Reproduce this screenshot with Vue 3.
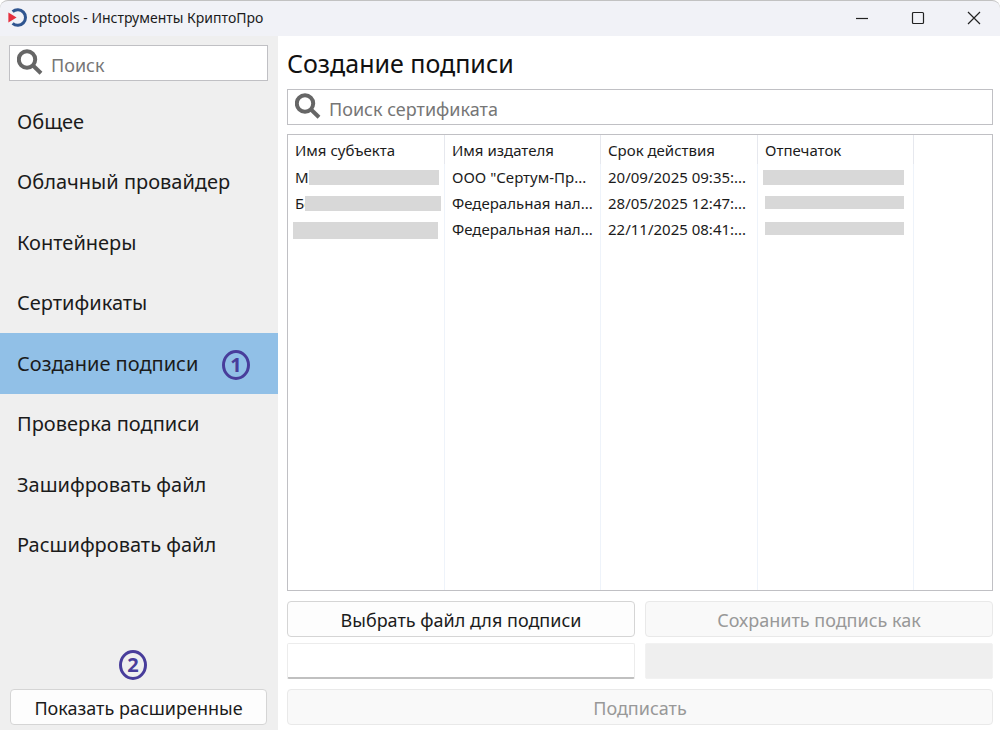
<script setup>
import { ref } from 'vue'

const sections = [
  'Общее',
  'Облачный провайдер',
  'Контейнеры',
  'Сертификаты',
  'Создание подписи',
  'Проверка подписи',
  'Зашифровать файл',
  'Расшифровать файл',
]
const active = ref(4)

const certificates = [
  { subject: 'М', issuer: 'ООО "Сертум-Пр...', expires: '20/09/2025 09:35:...', mask: 'a' },
  { subject: 'Бс', issuer: 'Федеральная нал...', expires: '28/05/2025 12:47:...', mask: 'b' },
  { subject: '', issuer: 'Федеральная нал...', expires: '22/11/2025 08:41:...', mask: 'c' },
]
</script>

<template>
  <div class="window">
    <header class="titlebar">
      <svg class="logo" viewBox="0 0 20 20" aria-hidden="true">
        <path d="M4.6 3.6A7.8 7.8 0 1 1 4.6 15.4" fill="none" stroke="#2f5590" stroke-width="3" />
        <path d="M0.4 4.4L8.6 9.5L0.4 14.6Z" fill="#e5303f" />
      </svg>
      <span class="caption">cptools - Инструменты КриптоПро</span>
      <div class="controls">
        <button type="button" aria-label="Свернуть">
          <svg viewBox="0 0 14 14"><path d="M1 7.5H13" /></svg>
        </button>
        <button type="button" aria-label="Развернуть">
          <svg viewBox="0 0 14 14"><rect x="1.5" y="1.5" width="11" height="11" rx="1" /></svg>
        </button>
        <button type="button" aria-label="Закрыть">
          <svg viewBox="0 0 14 14"><path d="M1 1L13 13M13 1L1 13" /></svg>
        </button>
      </div>
    </header>

    <div class="body">
      <aside class="sidebar">
        <label class="search">
          <svg viewBox="0 0 26 26" aria-hidden="true">
            <circle cx="10" cy="10.5" r="8.2" />
            <path d="M16 16.5L24 24.2" />
          </svg>
          <input type="text" placeholder="Поиск" aria-label="Поиск" />
        </label>
        <nav class="nav">
          <button
            v-for="(name, i) in sections"
            :key="name"
            type="button"
            :class="{ active: i === active }"
            @click="active = i"
          >
            {{ name }}
            <span v-if="i === 4" class="badge pinned">1</span>
          </button>
        </nav>
        <div class="more">
          <span class="badge">2</span>
          <button type="button" class="btn">Показать расширенные</button>
        </div>
      </aside>

      <main class="main">
        <h1>Создание подписи</h1>
        <label class="search">
          <svg viewBox="0 0 26 26" aria-hidden="true">
            <circle cx="10" cy="10.5" r="8.2" />
            <path d="M16 16.5L24 24.2" />
          </svg>
          <input type="text" placeholder="Поиск сертификата" aria-label="Поиск сертификата" />
        </label>
        <div class="list">
          <table>
            <colgroup>
              <col class="c1" /><col class="c2" /><col class="c1" /><col class="c2" /><col />
            </colgroup>
            <thead>
              <tr>
                <th>Имя субъекта</th>
                <th>Имя издателя</th>
                <th>Срок действия</th>
                <th>Отпечаток</th>
                <th></th>
              </tr>
            </thead>
            <tbody>
              <tr v-for="cert in certificates" :key="cert.mask">
                <td>{{ cert.subject }}<i class="mask" :class="'subject-' + cert.mask"></i></td>
                <td>{{ cert.issuer }}</td>
                <td>{{ cert.expires }}</td>
                <td><i class="mask" :class="'print-' + cert.mask"></i></td>
                <td></td>
              </tr>
              <tr class="filler"><td></td><td></td><td></td><td></td><td></td></tr>
            </tbody>
          </table>
        </div>
        <div class="files">
          <button type="button" class="btn">Выбрать файл для подписи</button>
          <button type="button" class="btn" disabled>Сохранить подпись как</button>
          <input type="text" class="path" aria-label="Файл для подписи" />
          <input type="text" class="path" aria-label="Файл подписи" disabled />
        </div>
        <button type="button" class="btn" disabled>Подписать</button>
      </main>
    </div>
  </div>
</template>

<style>
body {
  margin: 0;
  background: #fff;
}
</style>

<style scoped>
* {
  box-sizing: border-box;
}

.window {
  display: flex;
  flex-direction: column;
  min-height: 100vh;
  padding-bottom: 1px;
  font-family: "Noto Sans", "Open Sans", sans-serif;
  color: #1b1b1b;
  background: #fff;
}

button,
input {
  font-family: inherit;
  color: inherit;
}

.titlebar {
  display: flex;
  align-items: center;
  height: 36px;
  padding: 0 0 2px 8px;
  background: #f1f2f7;
  border-top: 1px solid #c2c2c2;
  border-radius: 8px 8px 0 0;
}

.logo {
  width: 20px;
  height: 20px;
}

.caption {
  margin-left: 4px;
  font-size: 14px;
  line-height: 20px;
}

.controls {
  display: flex;
  margin-left: auto;
}

.controls button {
  display: grid;
  place-items: center;
  width: 56px;
  height: 32px;
  padding: 0;
  border: 0;
  background: none;
}

.controls button:last-child {
  width: 52px;
  margin-left: 2px;
}

.controls svg {
  width: 14px;
  height: 14px;
  fill: none;
  stroke: #222;
  stroke-width: 1.2;
}

.body {
  display: flex;
  flex: 1;
}

.sidebar {
  display: flex;
  flex-direction: column;
  flex: 0 0 278px;
  min-width: 0;
  background: #efefef;
}

.search {
  display: flex;
  align-items: center;
  height: 36px;
  padding: 0 8px 0 7px;
  background: #fff;
  border: 1px solid #c0c0c4;
}

.search svg {
  flex: none;
  width: 26px;
  height: 26px;
  margin-bottom: 3px;
  fill: none;
  stroke: #666;
  stroke-width: 4;
}

.search input {
  flex: 1;
  min-width: 0;
  height: 30px;
  margin-left: 8px;
  padding: 4px 0 0;
  border: 0;
  outline: 0;
  background: none;
  font-size: 18px;
}

.search input::placeholder {
  color: #767676;
  opacity: 1;
}

.sidebar .search {
  margin: 9px 10px 0 9px;
}

.nav {
  display: grid;
  grid-template-rows: repeat(8, 1fr);
  height: 484px;
  margin-top: 10px;
}

.nav button {
  position: relative;
  padding: 0 0 0 17px;
  border: 0;
  background: none;
  font-size: 20px;
  text-align: left;
}

.nav .active {
  background: #91c0e7;
}

.badge {
  display: grid;
  place-items: center;
  width: 28px;
  height: 30px;
  border: 3px solid #483d9b;
  border-radius: 50%;
  color: #483d9b;
  font-family: "Noto Sans", sans-serif;
  font-size: 20px;
  font-weight: 700;
  line-height: 24px;
}

.pinned {
  position: absolute;
  top: 17px;
  right: 28px;
}

.more {
  display: flex;
  flex-direction: column;
  gap: 9px;
  margin-top: auto;
  padding: 0 11px 5px 10px;
}

.more .badge {
  margin-left: 109px;
}

.btn {
  height: 36px;
  padding: 2px 8px 0;
  border: 1px solid #d5d5d5;
  border-radius: 4px;
  background: #fdfdfd;
  font-size: 18px;
}

.btn:disabled {
  background: #f9f9f9;
  border-color: #e9e9e9;
  color: #989898;
}

.main {
  display: flex;
  flex-direction: column;
  flex: 1;
  min-width: 0;
  padding: 10px 7px 5px 9px;
}

h1 {
  margin: 0 0 9px;
  font-size: 25px;
  font-weight: 400;
  line-height: 34px;
  color: #111;
}

.list {
  display: flex;
  flex: 1;
  margin: 9px 0 10px;
  border: 1px solid #c0c0c4;
}

table {
  width: 100%;
  table-layout: fixed;
  border-collapse: separate;
  border-spacing: 0;
  font-size: 15px;
  line-height: 20px;
}

.c1 {
  width: 157px;
}

.c2 {
  width: 156px;
}

th,
td {
  position: relative;
  height: 26px;
  padding: 0 0 0 7px;
  border-right: 1px solid #eef3fa;
  font-weight: 400;
  text-align: left;
  white-space: nowrap;
}

th {
  height: 29px;
  border-right-color: #e6e8ee;
}

th:last-child,
td:last-child {
  border-right: 0;
}

.filler td {
  height: auto;
}

.mask {
  position: absolute;
  top: 6px;
  left: 5px;
  width: 141px;
  height: 15px;
  background: #d8d8d8;
}

.subject-a {
  left: 21px;
  width: 130px;
}

.subject-b {
  left: 17px;
  width: 136px;
}

.subject-c {
  width: 145px;
  height: 17px;
}

.print-b,
.print-c {
  left: 7px;
  width: 139px;
  height: 13px;
}

.files {
  display: grid;
  grid-template-columns: 1fr 1fr;
  gap: 6px 10px;
  margin-bottom: 10px;
}

.path {
  width: 100%;
  height: 36px;
  padding: 0 8px;
  border: 1px solid #ececec;
  border-bottom: 2px solid #c0c0c0;
  border-radius: 2px;
  background: #fff;
  font-size: 18px;
}

.path:disabled {
  background: #efefef;
  border: 1px solid #f2f2f2;
}
</style>
